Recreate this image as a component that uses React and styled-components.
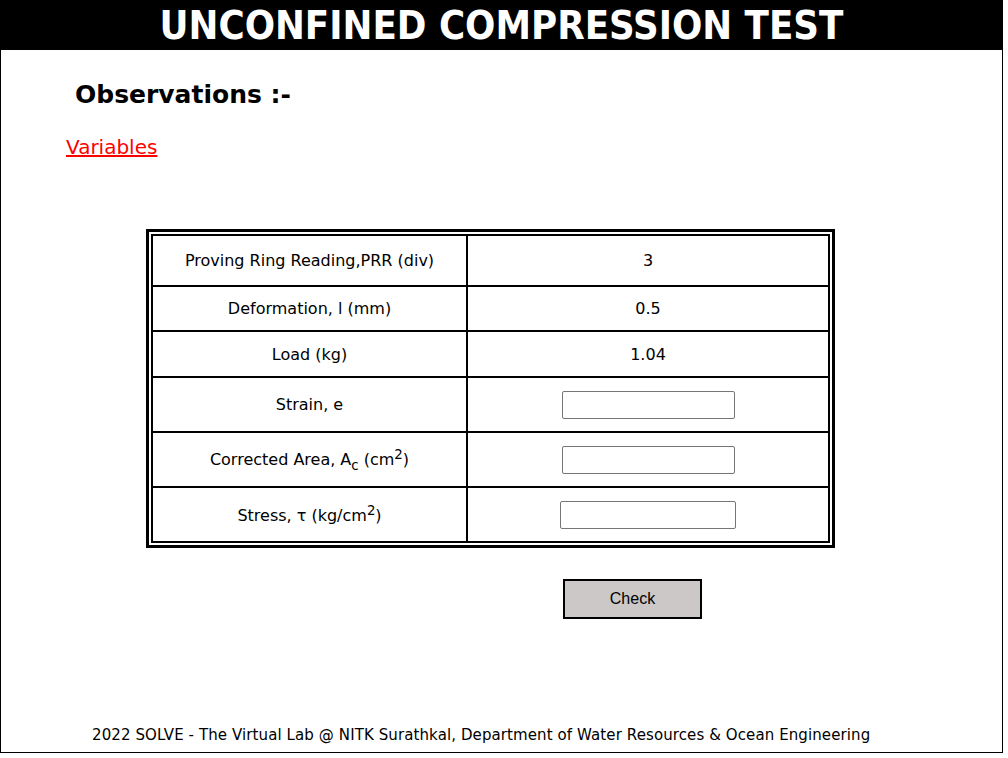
import React from 'react';
import styled, { createGlobalStyle } from 'styled-components';

const GlobalStyle = createGlobalStyle`
  body {
    margin: 0;
    background: #fff;
    font-family: "DejaVu Sans", Verdana, sans-serif;
  }
`

const Page = styled.div`
  box-sizing: border-box;
  width: 1003px;
  height: 753px;
  border: 1px solid #000;
  border-top: none;
  display: flex;
  flex-direction: column;
`

const Header = styled.h1`
  margin: 0;
  height: 50px;
  background: #000;
  color: #fff;
  font-family: "DejaVu Sans Condensed", "DejaVu Sans", sans-serif;
  font-weight: bold;
  font-size: 39.7px;
  line-height: 50px;
  text-align: center;
`

const Heading = styled.h2`
  margin: 29px 0 0 74px;
  font-size: 25px;
  font-weight: bold;
  line-height: 32px;
  color: #000;
`

const VarLink = styled.a`
  margin: 24px 0 0 65px;
  align-self: flex-start;
  font-size: 20px;
  line-height: 24px;
  color: #f00;
  text-decoration: underline;
  cursor: pointer;
`

const TableFrame = styled.div`
  align-self: flex-start;
  margin: 70px 0 0 145px;
  border: 3px solid #000;
  padding: 2px;
`

const Table = styled.table`
  border-collapse: collapse;
  border: 1px solid #000;
  font-size: 16px;
  color: #000;
`

const Cell = styled.td`
  border: 2px solid #000;
  text-align: center;
  padding: 0;
  width: ${p => p.$w}px;
  height: ${p => p.$h}px;
`

const Field = styled.input`
  box-sizing: border-box;
  width: ${p => p.$w || 173}px;
  height: 28px;
  border: 1px solid #767676;
  border-radius: 2px;
  padding: 1px 2px;
  background: #fff;
`

const ButtonRow = styled.div`
  margin: 31px 0 0 562px;
`

const CheckButton = styled.button`
  box-sizing: border-box;
  width: 139px;
  height: 40px;
  background: #ccc8c8;
  border: 2px solid #000;
  font-family: "Liberation Sans", Arial, sans-serif;
  font-size: 16px;
  color: #000;
  cursor: pointer;
`

const Footer = styled.footer`
  margin-top: auto;
  padding: 0 0 7px 91px;
  font-family: "DejaVu Sans", Verdana, sans-serif;
  font-size: 15px;
  letter-spacing: 0.1px;
  line-height: 20px;
  color: #000;
`

const rows = [
  { label: 'Proving Ring Reading,PRR (div)', value: '3', h: 49 },
  { label: 'Deformation, l (mm)', value: '0.5', h: 43 },
  { label: 'Load (kg)', value: '1.04', h: 44 },
  { label: 'Strain, e', input: 173, h: 53 },
  { label: <>Corrected Area, A<sub>c</sub> (cm<sup>2</sup>)</>, input: 173, h: 53 },
  { label: <>Stress, τ (kg/cm<sup>2</sup>)</>, input: 176, h: 53 },
]

const App = () => {
  return (
    <Page>
      <GlobalStyle />
      <Header>UNCONFINED COMPRESSION TEST</Header>
      <Heading>Observations :-</Heading>
      <VarLink>Variables</VarLink>
      <TableFrame>
        <Table>
          <tbody>
            {rows.map((r, i) => (
              <tr key={i}>
                <Cell $w={313} $h={r.h}>{r.label}</Cell>
                <Cell $w={360} $h={r.h}>
                  {r.input ? <Field type="text" $w={r.input} /> : r.value}
                </Cell>
              </tr>
            ))}
          </tbody>
        </Table>
      </TableFrame>
      <ButtonRow>
        <CheckButton>Check</CheckButton>
      </ButtonRow>
      <Footer>2022 SOLVE - The Virtual Lab @ NITK Surathkal, Department of Water Resources &amp; Ocean Engineering</Footer>
    </Page>
  )
}

export default App;
